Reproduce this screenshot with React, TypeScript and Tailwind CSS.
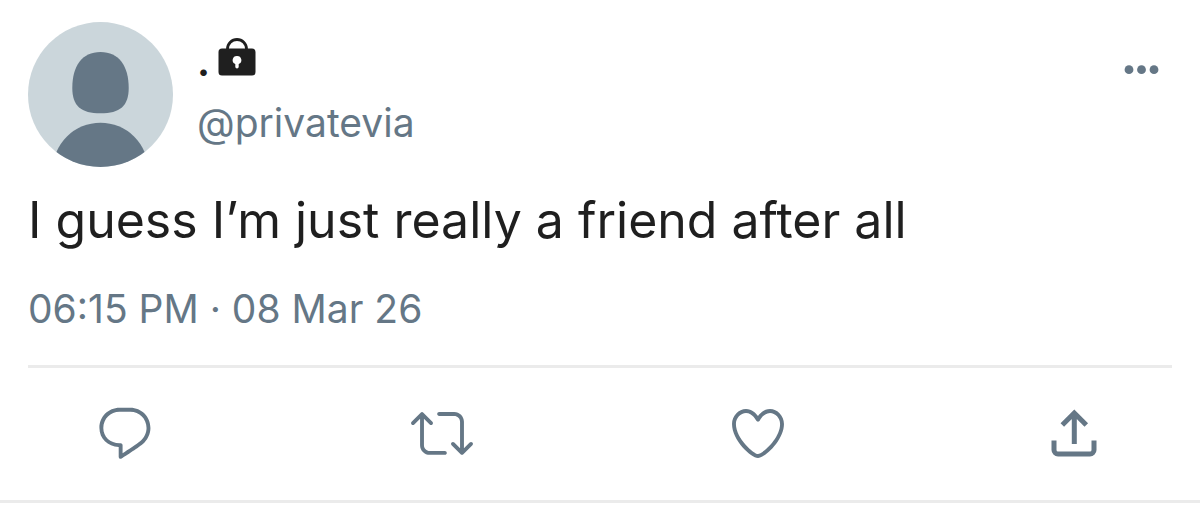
import type { FC, ReactNode } from "react";

const LockIcon: FC = () => (
  <svg viewBox="0 0 38 38" className="h-[38px] w-[38px]" role="img" aria-label="Protected account">
    <path d="M9.500 12V11a9.500 9.500 0 0 1 19 0V12" fill="none" stroke="currentColor" strokeWidth="2.800" />
    <path
      fillRule="evenodd"
      fill="currentColor"
      d="M4 10.500h30a3.500 3.500 0 0 1 3.500 3.500v20a3.500 3.500 0 0 1-3.500 3.500H4A3.500 3.500 0 0 1 .5 34V14A3.500 3.500 0 0 1 4 10.500zM19 18a4.200 4.200 0 0 0-1.700 8.100V28.800a1.700 1.700 0 0 0 3.400 0v-2.700A4.200 4.200 0 0 0 19 18z"
    />
  </svg>
);

const Avatar: FC = () => (
  <svg viewBox="0 0 145 145" className="h-[145px] w-[145px] shrink-0 rounded-full bg-[#cbd6db]" aria-hidden="true">
    <g fill="#657786">
      <path d="M72.500 30C91 30 100.700 44 100.700 66C100.700 84 92 91.300 72.500 91.300S44.300 84 44.300 66C44.300 44 54 30 72.500 30z" />
      <circle cx="72.500" cy="148.500" r="47.800" />
    </g>
  </svg>
);

const Action: FC<{ label: string; viewBox?: string; children: ReactNode }> = ({
  label,
  viewBox = "0 0 24 24",
  children,
}) => (
  <button type="button" aria-label={label} className="hover:text-sky-500">
    <svg viewBox={viewBox} className="h-[62px] w-[62px]" fill="currentColor">
      {children}
    </svg>
  </button>
);

const Header: FC<{ name: string; handle: string }> = ({ name, handle }) => (
  <header className="flex items-start gap-6">
    <Avatar />
    <div className="flex grow flex-col gap-[18px] pt-4">
      <h1 className="flex items-start gap-2 text-[39px] leading-[39px] font-bold">
        <span className="pt-1">{name}</span>
        <LockIcon />
      </h1>
      <a href="#profile" className="self-start text-[39px] leading-12 text-[#657786]">
        {handle}
      </a>
    </div>
    <button type="button" aria-label="More" className="mt-8 mr-3 text-[#657786]">
      <svg viewBox="0 0 36 32" className="h-8 w-9" fill="currentColor">
        <circle cx="5" cy="15.700" r="4.400" />
        <circle cx="17.500" cy="15.700" r="4.400" />
        <circle cx="30" cy="15.700" r="4.400" />
      </svg>
    </button>
  </header>
);

const Actions: FC = () => (
  <div className="flex justify-between px-[66px] pt-[34px] pb-9 text-[#657786]">
    <Action label="Reply">
      <path d="M14.046 2.242l-4.148-.01h-.002c-4.374 0-7.8 3.427-7.8 7.802 0 4.098 3.186 7.206 7.465 7.370v3.828c0 .108.044.286.120.403.142.225.384.347.632.347.138 0 .277-.038.402-.118.264-.168 6.473-4.140 8.088-5.506 1.902-1.610 3.040-3.970 3.043-6.312v-.017c-.006-4.367-3.430-7.787-7.800-7.788zm3.787 12.972c-1.134.960-4.862 3.405-6.772 4.643V16.670c0-.414-.335-.750-.750-.750h-.396c-3.660 0-6.318-2.476-6.318-5.886 0-3.534 2.768-6.302 6.300-6.302l4.147.010h.002c3.532 0 6.300 2.766 6.302 6.296-.003 1.910-.942 3.844-2.514 5.176z" />
    </Action>
    <Action label="Retweet">
      <path d="M23.770 15.670c-.292-.293-.767-.293-1.060 0l-2.220 2.220V7.650c0-2.068-1.683-3.750-3.750-3.750h-5.850c-.414 0-.750.336-.750.750s.336.750.750.750h5.850c1.240 0 2.250 1.010 2.250 2.250v10.240l-2.220-2.220c-.293-.293-.768-.293-1.060 0s-.294.768 0 1.060l3.500 3.500c.145.147.337.220.530.220s.383-.072.530-.220l3.500-3.500c.294-.292.294-.767 0-1.060zm-10.660 3.280H7.260c-1.240 0-2.250-1.010-2.250-2.250V6.460l2.220 2.220c.148.147.340.220.532.220s.384-.073.530-.220c.293-.293.293-.768 0-1.060l-3.500-3.500c-.293-.294-.768-.294-1.060 0l-3.500 3.500c-.294.292-.294.767 0 1.060s.767.293 1.060 0l2.220-2.220V16.700c0 2.068 1.683 3.750 3.750 3.750h5.850c.414 0 .750-.336.750-.750s-.337-.750-.750-.750z" />
    </Action>
    <Action label="Like">
      <path d="M12 21.638h-.014C9.403 21.590 1.950 14.856 1.950 8.478c0-3.064 2.525-5.754 5.403-5.754 2.290 0 3.830 1.580 4.646 2.730.814-1.148 2.354-2.730 4.645-2.730 2.880 0 5.404 2.690 5.404 5.755 0 6.376-7.454 13.110-10.037 13.157H12zM7.354 4.225c-2.080 0-3.903 1.988-3.903 4.255 0 5.740 7.034 11.596 8.550 11.658 1.518-.062 8.550-5.917 8.550-11.658 0-2.267-1.823-4.255-3.903-4.255-2.528 0-3.940 2.936-3.952 2.965-.230.562-1.156.562-1.387 0-.014-.030-1.425-2.965-3.954-2.965z" />
    </Action>
    <Action label="Share" viewBox="0 0 62 62">
      <g fill="none" stroke="currentColor" strokeWidth="5">
        <path d="M10 38.500v9.500a4 4 0 0 0 4 4h32a4 4 0 0 0 4-4v-9.500" />
        <path d="M30.300 42V11.500M18.300 23l12-12 12 12" />
      </g>
    </Action>
  </div>
);

export default function App() {
  return (
    <main className="bg-white font-['Inter',sans-serif] text-[#1f1f1f]">
      <article className="border-b-3 border-[#ebebeb] px-7 pt-[22px]">
        <Header name="." handle="@privatevia" />
        <p className="pt-6 text-[50px] leading-[58px]">I guess I’m just really a friend after all</p>
        <p className="border-b-3 border-[#ebebeb] pt-9 pb-8 text-[39px] leading-12 text-[#657786]">
          <time dateTime="2026-03-08T18:15">06:15 PM · 08 Mar 26</time>
        </p>
        <Actions />
      </article>
    </main>
  );
}
